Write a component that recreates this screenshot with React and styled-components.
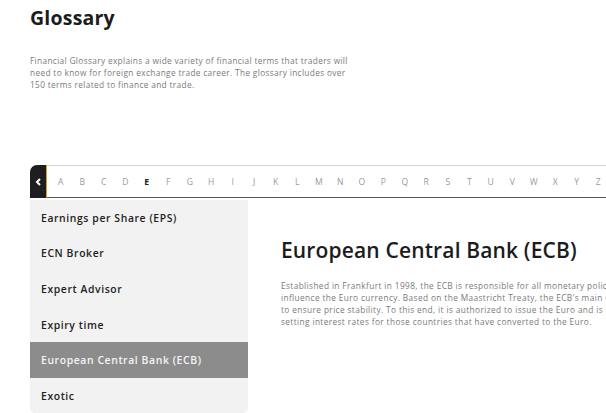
import React from "react";
import styled, { createGlobalStyle } from "styled-components";

const Global = createGlobalStyle`
  html, body { margin: 0; padding: 0; background: #fff; overflow: hidden; }
  body { font-family: "Open Sans", "Noto Sans", sans-serif; color: #1a1a1a; }
`;

const Page = styled.div`
  width: 760px;
  padding: 0 0 0 30px;
  box-sizing: border-box;
`;

const Title = styled.h1`
  margin: 0;
  padding-top: 6px;
  font-size: 19.5px;
  line-height: 24px;
  font-weight: 700;
  letter-spacing: 0.2px;
  color: #1c1c1c;
`;

const Intro = styled.p`
  margin: 25px 0 0;
  font-size: 8.3px;
  line-height: 12px;
  letter-spacing: 0.34px;
  color: #7a7a7a;
  white-space: nowrap;
`;

const Nav = styled.div`
  margin-top: 74px;
  display: flex;
  height: 33px;
  width: 720px;
`;

const BackTab = styled.div`
  width: 16px;
  background: #1e1e1e;
  border-top-left-radius: 7px;
  border-right: 1px solid #c9a227;
  display: flex;
  align-items: center;
  justify-content: center;
`;

const Letters = styled.div`
  flex: 1;
  display: flex;
  align-items: center;
  border-top: 1px solid #cfcfcf;
  border-bottom: 1px solid #5a5a5a;
  padding-left: 3px;
`;

const Letter = styled.span`
  width: 21.5px;
  text-align: center;
  font-size: 8.6px;
  font-weight: ${(p) => (p.$active ? 700 : 400)};
  color: ${(p) => (p.$active ? "#222" : "#9a9a9a")};
`;

const Body = styled.div`
  display: flex;
  margin-top: 2px;
  gap: 33px;
`;

const List = styled.div`
  width: 218px;
  background: #f2f2f2;
  border-radius: 0 0 7px 7px;
  overflow: hidden;
  display: flex;
  flex-direction: column;
`;

const Item = styled.div`
  height: 35.6px;
  display: flex;
  align-items: center;
  padding-left: 11px;
  font-size: 10.4px;
  letter-spacing: 0.6px;
  font-weight: 600;
  white-space: nowrap;
  color: ${(p) => (p.$active ? "#f4f4f4" : "#222")};
  background: ${(p) => (p.$active ? "#8c8c8c" : "transparent")};
`;

const Detail = styled.div`
  padding-top: 37px;
`;

const DetailTitle = styled.h2`
  margin: 0;
  font-size: 21px;
  line-height: 26px;
  font-weight: 600;
  letter-spacing: 0.15px;
  color: #1c1c1c;
  white-space: nowrap;
`;

const DetailText = styled.p`
  margin: 17px 0 0;
  font-size: 8.3px;
  line-height: 12px;
  letter-spacing: 0.38px;
  color: #7a7a7a;
  white-space: nowrap;
`;

const letters = "ABCDEFGHIJKLMNOPQRSTUVWXYZ".split("");
const terms = [
  "Earnings per Share (EPS)",
  "ECN Broker",
  "Expert Advisor",
  "Expiry time",
  "European Central Bank (ECB)",
  "Exotic",
];

export default function App() {
  return (
    <>
      <Global />
      <Page>
        <Title>Glossary</Title>
        <Intro>
          Financial Glossary explains a wide variety of financial terms that traders will
          <br />
          need to know for foreign exchange trade career. The glossary includes over
          <br />
          150 terms related to finance and trade.
        </Intro>
        <Nav>
          <BackTab>
            <svg width="7" height="8" viewBox="0 0 7 8">
              <path d="M5 1 L2 4 L5 7" stroke="#fff" strokeWidth="2" fill="none" />
            </svg>
          </BackTab>
          <Letters>
            {letters.map((l) => (
              <Letter key={l} $active={l === "E"}>
                {l}
              </Letter>
            ))}
          </Letters>
        </Nav>
        <Body>
          <List>
            {terms.map((t) => (
              <Item key={t} $active={t.startsWith("European")}>
                {t}
              </Item>
            ))}
          </List>
          <Detail>
            <DetailTitle>European Central Bank (ECB)</DetailTitle>
            <DetailText>
              Established in Frankfurt in 1998, the ECB is responsible for all monetary policy to
              <br />
              influence the Euro currency. Based on the Maastricht Treaty, the ECB's main objective is
              <br />
              to ensure price stability. To this end, it is authorized to issue the Euro and is responsible for
              <br />
              setting interest rates for those countries that have converted to the Euro.
            </DetailText>
          </Detail>
        </Body>
      </Page>
    </>
  );
}
